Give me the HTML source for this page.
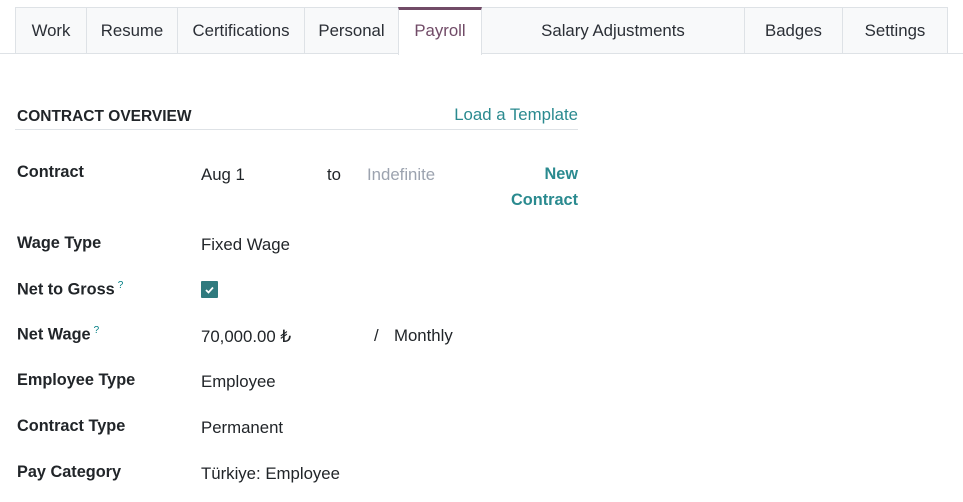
<!DOCTYPE html>
<html><head><style>
body{margin:0;width:963px;height:502px;background:#fff;font-family:"Liberation Sans",sans-serif;color:#212529;position:relative;overflow:hidden}
.t{position:absolute;top:7px;height:46px;background:#f8f9fa;border:1px solid #dee2e6;border-bottom:none;box-sizing:border-box;text-align:center;line-height:46px;font-size:16.8px;color:#2b2f36}
.line{position:absolute;left:0;right:0;top:53px;height:1px;background:#dee2e6}
.a{position:absolute;font-size:16.8px;white-space:nowrap}
.b{font-weight:bold;font-size:16.3px}
.teal{color:#2a8a8f}
sup{font-size:10px;color:#017e84;font-weight:normal;margin-left:3px}
</style></head><body>
<div class="line"></div>
<div class="t" style="left:15px;width:72px">Work</div>
<div class="t" style="left:86px;width:92px">Resume</div>
<div class="t" style="left:177px;width:128px">Certifications</div>
<div class="t" style="left:304px;width:95px">Personal</div>
<div class="t" style="left:398px;width:84px;background:#fff;border-top:3px solid #714b67;height:48px;line-height:42px;color:#714b67;z-index:2">Payroll</div>
<div class="t" style="left:481px;width:264px">Salary Adjustments</div>
<div class="t" style="left:744px;width:99px">Badges</div>
<div class="t" style="left:842px;width:106px">Settings</div>

<div class="a b" style="left:17px;top:108px;font-size:15.5px">CONTRACT OVERVIEW</div>
<div class="a teal" style="left:378px;width:200px;text-align:right;top:105px;font-size:16.8px">Load a Template</div>
<div style="position:absolute;left:15px;top:129px;width:563px;height:1px;background:#dee2e6"></div>

<div class="a b" style="left:17px;top:163px">Contract</div>
<div class="a" style="left:201px;top:165px">Aug 1</div>
<div class="a" style="left:327px;top:165px">to</div>
<div class="a" style="left:367px;top:165px;color:#9ca3af">Indefinite</div>
<div class="a teal" style="left:498px;top:161px;text-align:right;width:80px;line-height:26px;font-weight:bold;white-space:normal;font-size:16.3px">New Contract</div>

<div class="a b" style="left:17px;top:234px">Wage Type</div>
<div class="a" style="left:201px;top:235px">Fixed Wage</div>

<div class="a b" style="left:17px;top:280px">Net to Gross<sup>?</sup></div>
<div style="position:absolute;left:201px;top:281px;width:17px;height:17px;background:#2f7a7e;border-radius:1px">
<svg width="17" height="17"><path d="M5 9l2.5 2.5L12 6.5" stroke="#fff" stroke-width="1.8" fill="none"/></svg></div>

<div class="a b" style="left:17px;top:325px">Net Wage<sup>?</sup></div>
<div class="a" style="left:201px;top:326px">70,000.00 ₺</div>
<div class="a" style="left:374px;top:326px">/</div>
<div class="a" style="left:394px;top:326px">Monthly</div>

<div class="a b" style="left:17px;top:371px">Employee Type</div>
<div class="a" style="left:201px;top:372px">Employee</div>
<div class="a b" style="left:17px;top:417px">Contract Type</div>
<div class="a" style="left:201px;top:418px">Permanent</div>
<div class="a b" style="left:17px;top:463px">Pay Category</div>
<div class="a" style="left:201px;top:464px">Türkiye: Employee</div>
</body></html>
